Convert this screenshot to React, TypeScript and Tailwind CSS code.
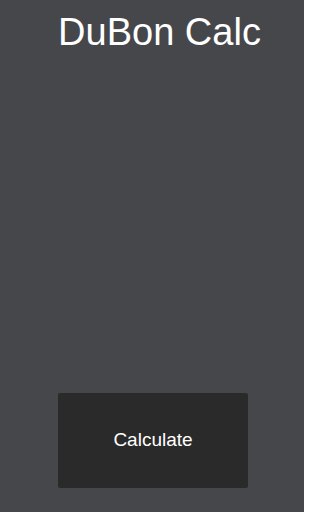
import React from "react";

export default function App() {
  return (
    <div
      className="w-[304px] h-[512px] bg-[#46474b] flex flex-col items-center overflow-hidden"
      style={{ fontFamily: '"Liberation Sans", Arial, sans-serif' }}
    >
      <h1 className="mt-[8px] pl-[15px] text-[38px] leading-[48px] text-white font-normal">
        DuBon Calc
      </h1>
      <div className="flex-1" />
      <button className="mb-[24px] ml-[2px] w-[190px] h-[95px] bg-[#2a2a2a] rounded-[2px] text-white text-[19px] flex items-center justify-center">
        Calculate
      </button>
    </div>
  );
}
